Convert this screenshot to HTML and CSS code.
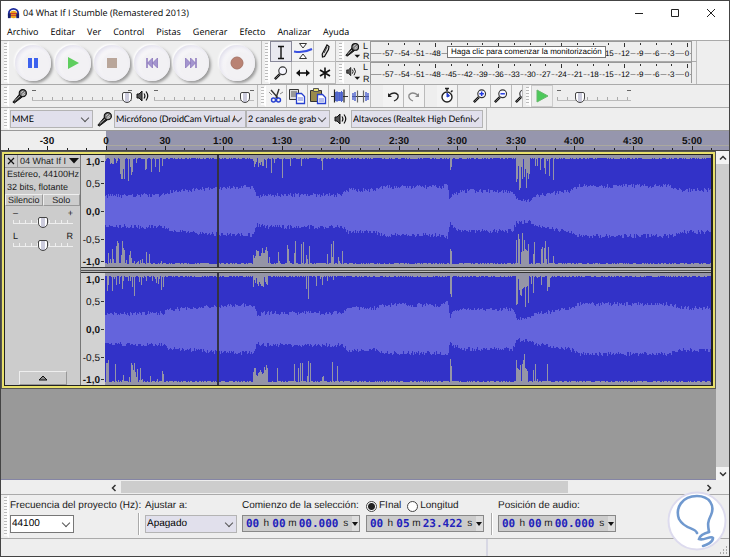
FILE: index.html
```html
<!DOCTYPE html>
<html lang="es">
<head>
<meta charset="utf-8">
<title>04 What If I Stumble (Remastered 2013)</title>
<link rel="stylesheet" href="styles.css">
</head>
<body>
<svg class="defs" aria-hidden="true">
  <symbol id="mic" viewBox="0 0 18 16">
    <path d="M2 14.5 9 6l3 3-8.500 6.500z" fill="#222" stroke="#111" stroke-width="1"/>
    <path d="M4 13 10 7.500" stroke="#bbb" stroke-width="1"/>
    <circle cx="12.500" cy="5" r="3.800" fill="#777" stroke="#111" stroke-width="1.200"/>
    <path d="M10.500 4.500 13 2.500M11.500 6.500 15 4M12 7.500 15 6" stroke="#e8e8e8" stroke-width=".8"/>
  </symbol>
  <symbol id="speaker" viewBox="0 0 14 12">
    <path d="M1 4h2l3-3v10L3 8H1z" fill="#555" stroke="#111"/>
    <path d="M8 3.500q1.800 2.500 0 5M10 1.500q3.500 4.500 0 9" fill="none" stroke="#111" stroke-width="1.200"/>
  </symbol>
  <symbol id="lens" viewBox="0 0 18 18">
    <path d="M8 10 3.500 14.500" stroke="#111" stroke-width="2.200"/>
    <path d="M8 10 4 14" stroke="#999" stroke-width=".6"/>
    <circle cx="10.500" cy="7" r="3.500" fill="#f8f8ff" stroke="#333" stroke-width="1"/>
  </symbol>
</svg>

<div class="window">
  <header class="titlebar">
    <svg class="logo" viewBox="0 0 14 14"><circle cx="7" cy="8" r="4" fill="#e8a21c"/><path d="M3 7h8M3 9h8" stroke="#c33" stroke-width="1"/><path d="M2 10V7a5 5 0 0 1 10 0v3" fill="none" stroke="#1c2a9c" stroke-width="2"/><rect x="1" y="7" width="3" height="5" fill="#16206e"/><rect x="10" y="7" width="3" height="5" fill="#16206e"/></svg>
    <h1>04 What If I Stumble (Remastered 2013)</h1>
    <div class="winbtns">
      <button aria-label="Minimizar"><svg viewBox="0 0 10 10"><path d="M1 5.500h8"/></svg></button>
      <button aria-label="Maximizar"><svg viewBox="0 0 10 10"><path d="M1.500 1.500h7v7h-7z"/></svg></button>
      <button aria-label="Cerrar"><svg viewBox="0 0 10 10"><path d="M1 1l8 8M9 1l-8 8"/></svg></button>
    </div>
  </header>
  <nav class="menu">
    <a href="#">Archivo</a><a href="#">Editar</a><a href="#">Ver</a><a href="#">Control</a><a href="#">Pistas</a><a href="#">Generar</a><a href="#">Efecto</a><a href="#">Analizar</a><a href="#">Ayuda</a>
  </nav>

  <div class="row row-main">
    <section class="bar transport">
      <i class="grip"></i>
      <div class="discs">
        <button aria-label="Pausa"><svg viewBox="0 0 14 14"><path d="M2 2h4v10H2zM8 2h4v10H8z" fill="#3d62ee"/></svg></button>
        <button aria-label="Reproducir"><svg viewBox="0 0 14 14"><path d="M2 1l11 6-11 6z" fill="#5fce5f"/></svg></button>
        <button aria-label="Parar"><svg viewBox="0 0 14 14"><path d="M2 2h10v10H2z" fill="#b9a69a"/></svg></button>
        <button aria-label="Inicio"><svg viewBox="0 0 14 14"><path d="M2 2v10" stroke="#8b76bd" stroke-width="1.500"/><path d="M7.500 2v10L2.500 7zM12.500 2v10l-5-5z" fill="#a394cf" stroke="#8570b8" stroke-width=".7"/></svg></button>
        <button aria-label="Final"><svg viewBox="0 0 14 14"><path d="M12 2v10" stroke="#8b76bd" stroke-width="1.500"/><path d="M6.500 2v10l5-5zM1.500 2v10l5-5z" fill="#a394cf" stroke="#8570b8" stroke-width=".7"/></svg></button>
      </div>
      <div class="discs"><button aria-label="Grabar"><svg viewBox="0 0 14 14"><circle cx="7" cy="7" r="6" fill="#b98273" stroke="#a87567"/></svg></button></div>
    </section>
    <section class="bar tools">
      <i class="grip"></i>
      <div class="toolgrid">
        <button class="on" aria-label="Selección"><svg viewBox="0 0 20 20"><path d="M7 4.500h6M7 16.500h6M10 4.500v12" stroke="#111" stroke-width="1.400"/></svg></button>
        <button aria-label="Envolvente"><svg viewBox="0 0 20 20"><path d="M1 10.500q9 2 18-2.500" fill="none" stroke="#3a50e0" stroke-width="2"/><path d="M6.500 2.500h7L10 7zM6.500 17.500h7L10 13z" fill="#fff" stroke="#333"/></svg></button>
        <button aria-label="Dibujo"><svg viewBox="0 0 20 20"><path d="M12 4l2 1.500-.5 3-4 7-2 .5-.3-3z" fill="#ddd" stroke="#111" stroke-width="1.200"/><path d="M12 6l-3 6" stroke="#333"/></svg></button>
        <button aria-label="Ampliación"><svg viewBox="0 0 18 18"><use href="#lens"/></svg></button>
        <button aria-label="Desplazamiento"><svg viewBox="0 0 20 20"><path d="M4 10h12" stroke="#111" stroke-width="1.600"/><path d="M3 10l4-3.500v7zM17 10l-4-3.500v7z" fill="#111"/></svg></button>
        <button aria-label="Multiherramienta"><svg viewBox="0 0 20 20"><path d="M10 4.500v11M5 7l10 6M15 7L5 13" stroke="#111" stroke-width="1.600"/></svg></button>
      </div>
    </section>
    <div class="meters">
      <section class="bar meterbar">
        <i class="grip"></i>
        <button class="metericon" aria-label="Nivel de grabación"><svg viewBox="0 0 20 20"><use href="#mic" width="17" height="15" x="0" y="1"/><path d="M11 14h6l-3 3z" fill="#111"/></svg></button>
        <div class="lr"><span>L</span><span>R</span></div>
        <div class="meter" data-hidden="-45 -18"><svg></svg><span class="tip">Haga clic para comenzar la monitorización</span></div>
      </section>
      <section class="bar meterbar">
        <i class="grip"></i>
        <button class="metericon" aria-label="Nivel de reproducción"><svg viewBox="0 0 20 20"><use href="#speaker" width="12" height="11" x="2" y="3"/><path d="M11 14h6l-3 3z" fill="#111"/></svg></button>
        <div class="lr"><span>L</span><span>R</span></div>
        <div class="meter"><svg></svg></div>
      </section>
    </div>
  </div>

  <div class="row row-edit">
    <section class="bar mixer">
      <i class="grip"></i>
      <svg class="mic"><use href="#mic"/></svg>
      <input class="slider long" type="range" min="0" max="100" value="100" aria-label="Volumen de grabación">
      <svg class="spk"><use href="#speaker"/></svg>
      <input class="slider long" type="range" min="0" max="100" value="95" aria-label="Volumen de reproducción">
    </section>
    <section class="bar edit">
      <i class="grip"></i>
      <div class="group">
        <button aria-label="Cortar"><svg viewBox="0 0 20 20"><path d="M5 4l7 8M13 3l-3 9" stroke="#333" stroke-width="1.400"/><path d="M3 6l3 3M14 8l3-2" stroke="#888"/><circle cx="7.500" cy="14" r="2" fill="none" stroke="#2740d0" stroke-width="1.400"/><circle cx="12.500" cy="14" r="2" fill="none" stroke="#2740d0" stroke-width="1.400"/></svg></button>
        <button aria-label="Copiar"><svg viewBox="0 0 20 20"><path d="M2.500 3.500h9v10h-9z" fill="#ddd" stroke="#333"/><path d="M4 6h6M4 8h5M4 10h6" stroke="#555"/><path d="M9.500 7.500h5l3 3v7h-8z" fill="#fff" stroke="#2740d0" stroke-width="1.300"/><path d="M11 12h5M11 14h5" stroke="#6a7be0"/></svg></button>
        <button aria-label="Pegar"><svg viewBox="0 0 20 20"><path d="M2.500 4.500h11v11h-11z" fill="#998b4a" stroke="#333"/><path d="M5.500 2.500h5v3h-5z" fill="#e8e070" stroke="#555"/><path d="M9.500 8.500h5l3 3v6h-8z" fill="#fff" stroke="#2740d0" stroke-width="1.300"/><path d="M11 13h5M11 15h5" stroke="#6a7be0"/></svg></button>
        <button aria-label="Recortar"><svg viewBox="0 0 20 20"><path d="M2 10.500h17" stroke="#333"/><path d="M6 6h8v9H6z" fill="#5a6ecb"/><path d="M5.500 3.500v13M15 3.500v13" stroke="#222" stroke-width="1.200"/><path d="M8 5v11M10.500 6v9M12.500 5v11" stroke="#4a60d0"/></svg></button>
        <button aria-label="Silenciar"><svg viewBox="0 0 20 20"><path d="M2 10.500h17" stroke="#333"/><path d="M3 7v7M5 6v9M16 6v9M18 7v7" stroke="#5468d0" stroke-width="1.500"/><path d="M7.500 4.500v12M13.500 4.500v12" stroke="#666" stroke-width="1.200"/></svg></button>
      </div>
      <div class="group">
        <button aria-label="Deshacer"><svg viewBox="0 0 20 20"><path d="M6 9q6-4 9 0 1 4-4 6" fill="none" stroke="#222" stroke-width="1.300"/><path d="M5 7v4h4z" fill="#222"/></svg></button>
        <button aria-label="Rehacer"><svg viewBox="0 0 20 20"><path d="M14 9q-6-4-9 0-1 4 4 6" fill="none" stroke="#888" stroke-width="1.300"/><path d="M15 7v4h-4z" fill="#888"/></svg></button>
      </div>
      <div class="group">
        <button aria-label="Sincronizar"><svg viewBox="0 0 20 20"><circle cx="10" cy="11" r="5" fill="#fff" stroke="#222" stroke-width="1.400"/><path d="M10 5V3M8 2.500h4M14 6l1.500-1.500" stroke="#222" stroke-width="1.500"/><path d="M10 11V7l2.500 3z" fill="#2740d0" stroke="#2740d0"/></svg></button>
      </div>
      <div class="group zooms">
        <button aria-label="Acercar"><svg viewBox="0 0 18 18"><use href="#lens"/><path d="M8.500 7h4M10.500 5v4" stroke="#2038e0" stroke-width="1.300"/></svg></button>
        <button aria-label="Alejar"><svg viewBox="0 0 18 18"><use href="#lens"/><path d="M8.500 7h4" stroke="#2038e0" stroke-width="1.300"/></svg></button>
        <button aria-label="Ajustar"><svg viewBox="0 0 18 18"><use href="#lens"/></svg></button>
      </div>
    </section>
    <section class="bar playspeed">
      <i class="grip"></i>
      <button aria-label="Reproducir a velocidad"><svg viewBox="0 0 20 20"><path d="M5 4l11 6-11 6z" fill="#4cc95a" stroke="#67b86c"/></svg></button>
      <input class="slider" type="range" min="0" max="100" value="28" aria-label="Velocidad de reproducción">
    </section>
  </div>

  <div class="row row-device">
    <section class="bar device">
      <i class="grip"></i>
      <label class="combo host"><select aria-label="Servidor de audio"><option>MME</option></select></label>
      <svg class="mic"><use href="#mic"/></svg>
      <label class="combo input"><select aria-label="Dispositivo de grabación"><option>Micrófono (DroidCam Virtual A</option></select></label>
      <label class="combo channels"><select aria-label="Canales"><option>2 canales de grab</option></select></label>
      <svg class="spk"><use href="#speaker"/></svg>
      <label class="combo output"><select aria-label="Dispositivo de reproducción"><option>Altavoces (Realtek High Defini</option></select></label>
    </section>
  </div>

  <div class="ruler"><svg id="ruler"></svg></div>

  <main class="workspace">
    <div class="canvas">
      <article class="track">
        <aside class="panel">
          <div class="trackhead"><button aria-label="Cerrar pista"><svg viewBox="0 0 8 8"><path d="M1 1l6 6M7 1L1 7" stroke="#111" stroke-width="1.200"/></svg></button><button class="name">04 What If I<svg viewBox="0 0 10 6"><path d="M0 0h10L5 5.500z" fill="#111"/></svg></button></div>
          <p>Estéreo, 44100Hz</p>
          <p>32 bits, flotante</p>
          <div class="mutesolo"><button>Silencio</button><button>Solo</button></div>
          <div class="knob"><span>–</span><span>+</span><input class="slider" type="range" value="50" aria-label="Ganancia"></div>
          <div class="knob"><span>L</span><span>R</span><input class="slider" type="range" value="50" aria-label="Balance"></div>
          <button class="collapse" aria-label="Contraer"><svg viewBox="0 0 10 6"><path d="M1 5h8L5 1z" fill="#888" stroke="#111"/></svg></button>
        </aside>
        <div class="channels-view">
          <div class="channel"><svg class="scale"></svg><svg class="wave"></svg></div>
          <div class="channel"><svg class="scale"></svg><svg class="wave"></svg></div>
        </div>
      </article>
    </div>
    <div class="vscroll">
      <button aria-label="Subir"><svg viewBox="0 0 8 6"><path d="M1 4.500l3-3 3 3"/></svg></button>
      <button aria-label="Bajar"><svg viewBox="0 0 8 6"><path d="M1 1.500l3 3 3-3"/></svg></button>
    </div>
  </main>
  <div class="hscroll">
    <button aria-label="Izquierda"><svg viewBox="0 0 6 8"><path d="M4.500 1l-3 3 3 3"/></svg></button>
    <div class="groove"><div class="thumb"></div></div>
    <button aria-label="Derecha"><svg viewBox="0 0 6 8"><path d="M1.500 1l3 3-3 3"/></svg></button>
  </div>

  <footer class="selection">
    <i class="grip"></i>
    <div class="field rate"><label for="rate">Frecuencia del proyecto (Hz):</label><div class="combo white"><select id="rate"><option>44100</option></select></div></div>
    <i class="divider"></i>
    <div class="field snap"><label for="snap">Ajustar a:</label><div class="combo"><select id="snap"><option>Apagado</option></select></div></div>
    <div class="field"><label for="start-h">Comienzo de la selección:</label>
      <div class="time"><input id="start-h" value="00"><span>h</span><input value="00" aria-label="Minutos de inicio"><span>m</span><input class="sec" value="00.000" aria-label="Segundos de inicio"><span>s</span><button aria-label="Formato de inicio"></button></div></div>
    <div class="field"><div class="radios"><label><input type="radio" name="mode" checked>FInal</label><label><input type="radio" name="mode">Longitud</label></div>
      <div class="time"><input value="00" aria-label="Horas de final"><span>h</span><input value="05" aria-label="Minutos de final"><span>m</span><input class="sec" value="23.422" aria-label="Segundos de final"><span>s</span><button aria-label="Formato de final"></button></div></div>
    <i class="divider"></i>
    <div class="field"><label for="pos-h">Posición de audio:</label>
      <div class="time"><input id="pos-h" value="00"><span>h</span><input value="00" aria-label="Minutos de posición"><span>m</span><input class="sec" value="00.000" aria-label="Segundos de posición"><span>s</span><button aria-label="Formato de posición"></button></div></div>
  </footer>
  <div class="status"><span></span><span></span><svg viewBox="0 0 9 9"><path d="M7 1h1M4 4h1M7 4h1M1 7h1M4 7h1M7 7h1" stroke="#aaa" stroke-width="2"/></svg></div>
  <svg class="badge" viewBox="0 0 60 60"><circle cx="30" cy="30" r="28.500" fill="#fff" stroke="#dddbee" stroke-width="2"/><g fill="none" stroke="#7099cf" stroke-width="2.600" stroke-linecap="round"><path d="M30 42C28 36 18 39 12 28 8 17 15 5 30 5 43 5 48 15 44 24 40 32 41 34 42 41"/><path d="M42 41C38 42 33 44 32 48 37 50 44 44 46 47 46 51 40 54 36 55"/></g></svg>
</div>
<script src="script.js"></script>
</body>
</html>
```
FILE: styles.css
```css
* { box-sizing: border-box; }
body { margin: 0; font: 10px/12px "Liberation Sans", Arial, sans-serif; color: #1a1a1a; text-rendering: geometricPrecision; }
button { padding: 0; border: 0; background: none; font: inherit; color: inherit; display: flex; align-items: center; justify-content: center; }
button, select, input { text-rendering: inherit; }
select, input { font: inherit; color: inherit; margin: 0; }
svg { display: block; }
.defs { width: 0; height: 0; position: absolute; }
.window { position: relative; min-height: 100vh; display: flex; flex-direction: column; background: #eee; border: 1px solid #444; overflow: hidden; }

.titlebar { display: flex; align-items: center; height: 24px; background: #fff; padding-left: 6px; gap: 3px; }
.logo { width: 13px; height: 13px; }
.titlebar h1 { margin: 0; flex: 1; font: 9px/14px "Open Sans", sans-serif; color: #000; }
.winbtns { display: flex; }
.winbtns button { width: 36px; height: 22px; }
.winbtns svg { width: 10px; height: 10px; fill: none; stroke: #222; }
.menu { display: flex; gap: 12px; height: 15px; background: #fff; padding-left: 6px; font: 9px/14px "Open Sans", sans-serif; }
.menu a { color: #000; text-decoration: none; }

.row { display: flex; border-top: 1px solid #aaa; background: #eee; }
.bar { display: flex; align-items: center; border-right: 1px solid #bbb; }
.grip { align-self: stretch; flex: none; width: 8px; border: solid #eee; border-width: 2px 2px 2px 3px; background: repeating-linear-gradient(#bbb 0 1px, #fafafa 1px 3px); border-right-color: #fff; }
.row-main { height: 44px; }
.transport { width: 261px; }
.discs { display: flex; justify-content: space-between; }
.transport .discs:nth-child(2) { width: 194px; margin-left: 6px; }
.transport .discs:nth-child(3) { margin-left: 10px; }
.discs button { width: 36px; height: 36px; border-radius: 50%; background: radial-gradient(circle at 60% 60%, #f2f1f4 45%, #fff 70%); box-shadow: 2px 2px 3px #999, -1px -1px 2px #fff, inset 2px 2px 4px #e0deeb; }
.discs svg { width: 14px; height: 14px; }
.toolgrid { display: grid; grid-template-columns: repeat(3, 22px); grid-template-rows: 21px 22px; }
.toolgrid button, .group button { border: solid #bbb; border-width: 0 1px 1px 0; background: #f3f3f3; }
.toolgrid button.on { background: #e9e9f0; border: 1px solid #889; }
.toolgrid svg { width: 20px; height: 20px; }
.tools { width: 74px; border-right-color: #999; }
.meters { flex: 1; display: grid; grid-template-rows: 21px 22px; }
.meterbar { width: 361px; }
.meterbar:first-child { border-bottom: 1px solid #aaa; }
.metericon { width: 19px; height: 20px; }
.metericon svg { width: 20px; height: 20px; }
.lr { width: 7px; display: flex; flex-direction: column; justify-content: space-between; align-self: stretch; font-size: 9px; line-height: 10px; }
.meter { position: relative; flex: 1; align-self: stretch; border: solid #999; border-width: 1px 0 0 1px; margin-right: 4px; }
.meter svg { width: 100%; height: 20px; font-size: 8px; }
.tip { position: absolute; left: 76px; top: 4px; border: 1px solid #777; background: #fff; padding: 0 3px; line-height: 10px; font-size: 8px; color: #000; white-space: nowrap; }

.row-edit { height: 23px; }
.mixer { width: 257px; }
.mic { width: 17px; height: 16px; flex: none; }
.spk { width: 14px; height: 12px; flex: none; }
.mixer .mic { margin: 0 4px 0 2px; }
.mixer .spk { margin: 0 4px; }
.slider { appearance: none; height: 16px; flex: none; background: linear-gradient(#bbb, #bbb) 0 12px / 100% 1px no-repeat, repeating-linear-gradient(90deg, #aaa 0 1px, transparent 1px 10px) 0 9px / 100% 3px no-repeat, linear-gradient(#666, #666) 0 2px / 4px 1px no-repeat, linear-gradient(#666, #666) 100% 2px / 4px 1px no-repeat; width: 74px; }
.slider.long { width: 100px; }
.slider::-webkit-slider-thumb { appearance: none; width: 10px; height: 11px; margin-top: 3px; border: 1px solid #444; border-radius: 2px 2px 5px 5px; background: linear-gradient(90deg, #fff 20%, #ccd 20% 80%, #fff 80%); }
.edit { flex: 0 0 265px; overflow: hidden; }
.group { display: flex; flex: none; margin-right: 12px; }
.group button { width: 21px; height: 22px; flex: none; border-bottom: 0; }
.group svg, .playspeed svg { width: 20px; height: 20px; }
.zooms { margin-right: 0; }
.playspeed { width: 108px; border-right: 0; }
.playspeed button { width: 22px; height: 22px; border: 1px solid #ccc; }
.playspeed .slider { margin-left: 4px; }

.row-device { height: 23px; }
.device { width: 486px; }
.combo { position: relative; display: block; flex: none; height: 18px; border: 1px solid #b4b4b4; background: #e1e0ec; font: 9px/12px Lato, sans-serif; }
.combo select { appearance: none; width: 100%; height: 16px; border: 0; background: none; padding: 0 10px 0 1px; border-radius: 0; color: #000; }
.combo::after { content: ""; position: absolute; right: 4px; top: 4px; width: 5px; height: 5px; border: solid #555; border-width: 0 1px 1px 0; transform: rotate(45deg); pointer-events: none; }
.host { width: 83px; margin-left: 1px; }
.device .mic { margin: 0 1px 0 3px; }
.input { width: 132px; }
.channels { width: 84px; }
.device .spk { margin: 0 3px 0 4px; }
.output { width: 132px; }

.ruler { height: 21px; background: #eee; border-top: 1px solid #999; border-bottom: 1px solid #444; }
.ruler svg { width: 100%; height: 19px; font-size: 10px; font-weight: 700; }
.workspace { flex: 1; display: flex; background: #999; min-height: 300px; }
.canvas { flex: 1; min-width: 0; border-bottom: 1px solid #8585a5; }
.track { display: flex; height: 238px; border: 1px solid #555; outline: 2px solid #e8e06c; outline-offset: -3px; background: #222; padding: 3px 4px 3px 3px; }
.panel { width: 76px; flex: none; background: #ccc; display: flex; flex-direction: column; border: solid #777; border-width: 0 1px 0 0; }
.panel p { margin: 0; padding-left: 2px; line-height: 13px; font-size: 9px; }
.trackhead { display: flex; height: 13px; font-size: 9px; border-bottom: 1px solid #999; }
.trackhead button:first-child { width: 13px; border-right: 1px solid #999; }
.trackhead button:first-child svg { width: 8px; height: 8px; }
.trackhead .name { flex: 1; justify-content: space-between; padding: 0 1px 0 2px; white-space: nowrap; }
.name svg { width: 10px; height: 6px; }
.mutesolo { display: grid; grid-template-columns: 1fr 1fr; grid-template-rows: 12px; font-size: 9px; }
.mutesolo button { border: 1px solid #999; border-top-color: #eee; border-left-color: #eee; line-height: 10px; }
.knob { display: flex; flex-wrap: wrap; justify-content: space-between; margin: 3px 7px 0 8px; font-size: 9px; line-height: 8px; height: 20px; }
.knob .slider { width: 60px; height: 12px; background: linear-gradient(#eee, #eee) 0 6px / 100% 1px no-repeat, repeating-linear-gradient(90deg, #eee 0 1px, transparent 1px 6px) 0 3px / 100% 3px no-repeat; }
.knob .slider::-webkit-slider-thumb { margin-top: -1px; }
.collapse { margin: auto auto 0; width: 48px; height: 14px; border: 1px solid #999; border-top-color: #eee; border-left-color: #eee; }
.collapse svg { width: 10px; height: 6px; }
.channels-view { flex: 1; min-width: 0; display: grid; grid-template-rows: repeat(2, minmax(0, 1fr)); gap: 6px; background: linear-gradient(#333 0 1px, #bbb 1px 3px, #555 3px 4px, #bbb 4px 5px, #333 5px) 0 50% / 100% 6px no-repeat; }
.channel { display: flex; min-width: 0; }
.scale { width: 24px; height: 100%; flex: none; background: #d2d2d2; font-size: 10px; }
.wave { flex: 1; min-width: 0; height: 100%; background: #9595a6; shape-rendering: crispEdges; }
.vscroll { width: 13px; background: #cdcdcd; display: flex; flex-direction: column; justify-content: space-between; }
.vscroll button { height: 13px; background: #f3f3f3; }
.vscroll svg { width: 8px; height: 6px; }
.vscroll path, .hscroll path { fill: none; stroke: #333; stroke-width: 1.500; }
.hscroll { display: flex; height: 14px; padding: 1px 13px 0 106px; background: #eee; }
.hscroll button { width: 14px; }
.hscroll svg { width: 6px; height: 8px; }
.groove { flex: 1; }
.thumb { width: 77%; height: 12px; background: #cdcdcd; }

.selection { display: flex; height: 44px; border-top: 1px solid #aaa; padding-top: 2px; background: #eee; }
.selection .grip { margin: -2px 1px 0 0; }
.field { display: flex; flex-direction: column; gap: 3px; margin-right: 6px; padding-top: 3px; white-space: nowrap; }
.selection .combo { font: inherit; }
.rate { width: 127px; margin-right: 0; }
.rate .combo { width: 64px; }
.white { background: #fff; border-color: #777; }
.snap { width: 92px; margin-right: 5px; }
.divider { width: 2px; height: 22px; margin: 16px 5px 0 1px; border-left: 1px solid #aaa; border-right: 1px solid #fff; }
.time { display: flex; align-items: center; width: 118px; height: 17px; padding-left: 3px; border: 1px solid #888; background: #ccc; font: 11px/12px "DejaVu Sans Mono", monospace; }
.time input { width: 14px; padding: 0; border: 0; background: none; color: #2222bb; font-weight: 700; }
.time .sec { width: 41px; }
.time span { flex: 1; text-align: center; font-family: "Liberation Sans", Arial, sans-serif; font-size: 10px; }
.time button { width: 7px; height: 15px; background: #ddd; }
.time button::after { content: ""; border: solid transparent; border-width: 4px 3px 0; border-top-color: #111; }
.radios { display: flex; gap: 6px; }
.radios label { display: flex; align-items: center; gap: 2px; }
.radios input { appearance: none; width: 11px; height: 11px; border: 1px solid #444; border-radius: 50%; background: #fff; }
.radios input:checked { background: radial-gradient(#222 0 3px, #fff 4px); }
.status { display: flex; height: 18px; border-top: 1px solid #aaa; }
.status span:first-child { width: 487px; border-right: 2px solid #d8d8e4; }
.status svg { width: 9px; height: 9px; margin: auto 1px 1px auto; }
.badge { position: absolute; right: 2px; bottom: 5px; width: 60px; height: 60px; }
```
FILE: script.js
```js
const line = (x, y1, y2, color, w = 1) =>
  `<path d="M${x} ${y1}V${y2}" stroke="${color}" stroke-width="${w}"/>`;

// Meter scales, -57 dB to 0 dB; labels under an open tooltip are left out
document.querySelectorAll('.meter').forEach(meter => {
  const svg = meter.querySelector('svg');
  const [from, to] = (meter.dataset.hidden || '1 1').split(' ').map(Number);
  const w = svg.clientWidth, step = (w - 22) / 19;
  let out = `<path d="M0 11.500H${w}" stroke="#999"/>`;
  for (let i = 0; i < 20; i++) {
    const x = Math.round(17 + i * step), db = -57 + i * 3;
    const tw = db > -10 ? (db ? 9 : 6) : 13;
    out += line(x + .5, 1, i % 4 === 3 ? 5 : 3, '#333');
    if (db >= from && db <= to) continue;
    out += `<path d="M${x - tw / 2} 11.500h${tw}" stroke="#eee" stroke-width="2"/>` +
      `<text x="${x}" y="14" text-anchor="middle" fill="#000">${db}</text>`;
  }
  svg.innerHTML = out + line(w - .5, 0, 20, '#999');
});

// Timeline: 10-second ticks, 30-second labels
const ruler = document.getElementById('ruler');
const origin = 105, perSec = 1.952, rw = ruler.clientWidth;
let marks = `<rect x="${origin}" width="${rw - origin}" height="19" fill="#9696ad"/><path d="M${origin} 14.500H${rw}" stroke="#aaa89f"/>`;
for (let t = -50; origin + t * perSec < rw; t += 10) {
  const x = Math.round(origin + t * perSec), major = t % 30 === 0;
  marks += line(x + .5, major ? 15 : 17, 19, '#222');
  if (major) {
    const label = t < 60 ? t : Math.floor(t / 60) + ':' + String(t % 60).padStart(2, '0');
    marks += `<text x="${x}" y="13" text-anchor="middle" fill="#111">${label}</text>`;
  }
}
ruler.innerHTML = marks;

// Vertical amplitude scales
document.querySelectorAll('.scale').forEach(svg => {
  const h = svg.clientHeight, mid = h / 2;
  svg.innerHTML = [[1, '1,0'], [.5, '0,5'], [0, '0,0'], [-.5, '-0,5'], [-1, '-1,0']].map(([v, s]) => {
    const y = Math.min(h - 6, Math.max(6, mid - v * mid));
    return `<text x="19" y="${y + 4}" text-anchor="end" fill="#111" font-weight="${v % 1 ? 400 : 700}">${s}</text>` +
      `<path d="M20 ${Math.round(y) + .5}h3" stroke="#333"/>`;
  }).join('');
});

// RMS envelope: [position, amplitude in px]
const rms = [[0, 13], [58, 14], [62, 17], [110, 21], [148, 22], [152, 12], [160, 14], [237, 14], [243, 19], [271, 19],
  [276, 22], [337, 22], [343, 25], [345, 9], [348, 15], [360, 18], [408, 18], [412, 9], [426, 9], [430, 13],
  [450, 16], [468, 19], [474, 23], [565, 23], [578, 19], [607, 19]];
// Passages with quiet peaks: [from, to, chance, depth in px]
const dips = [[0, 30, .45, 23], [30, 60, .35, 14], [148, 163, .9, 17], [163, 238, .17, 23], [345, 347, 1, 22],
  [411, 424, .85, 32], [424, 450, .3, 22]];
document.querySelectorAll('.wave').forEach((svg, ch) => {
  let seed = 7 + ch * 3;
  const rnd = () => (seed = (seed * 16807) % 2147483647) / 2147483647;
  const w = svg.clientWidth, h = svg.clientHeight, mid = h / 2;
  const env = x => {
    const i = Math.max(1, rms.findIndex(p => p[0] >= x));
    const [a, b] = [rms[i - 1], rms[i]];
    return a[1] + (b[1] - a[1]) * (x - a[0]) / (b[0] - a[0]);
  };
  let peaks = '', body = '';
  for (let px = 0; px < w; px++) {
    const x = px / w * 607;
    let up = mid - 3 - Math.floor(rnd() * 2), down = mid - 3 - Math.floor(rnd() * 2);
    for (const [a, b, chance, depth] of dips) {
      if (x >= a && x < b) {
        const dense = depth === 17 || depth === 32;
        if (rnd() < chance) up -= Math.pow(rnd(), dense ? .7 : 1.3) * depth * (depth === 17 ? .6 : 1);
        if (rnd() < chance) down -= (dense ? .3 + rnd() * .7 : Math.pow(rnd(), 1.3)) * depth;
      }
    }
    const e = env(x);
    peaks += `M${px + .5} ${Math.round(mid - up)}V${Math.round(mid + down)}`;
    body += `M${px + .5} ${Math.round(mid - e - rnd() * 4)}V${Math.round(mid + e + rnd() * 4)}`;
  }
  svg.innerHTML = `<path d="${peaks}" stroke="#3232c8"/><path d="${body}" stroke="#6464dc"/>` +
    line(Math.round(w * .184) + 1, 0, h, '#333344', 2);
});
```
